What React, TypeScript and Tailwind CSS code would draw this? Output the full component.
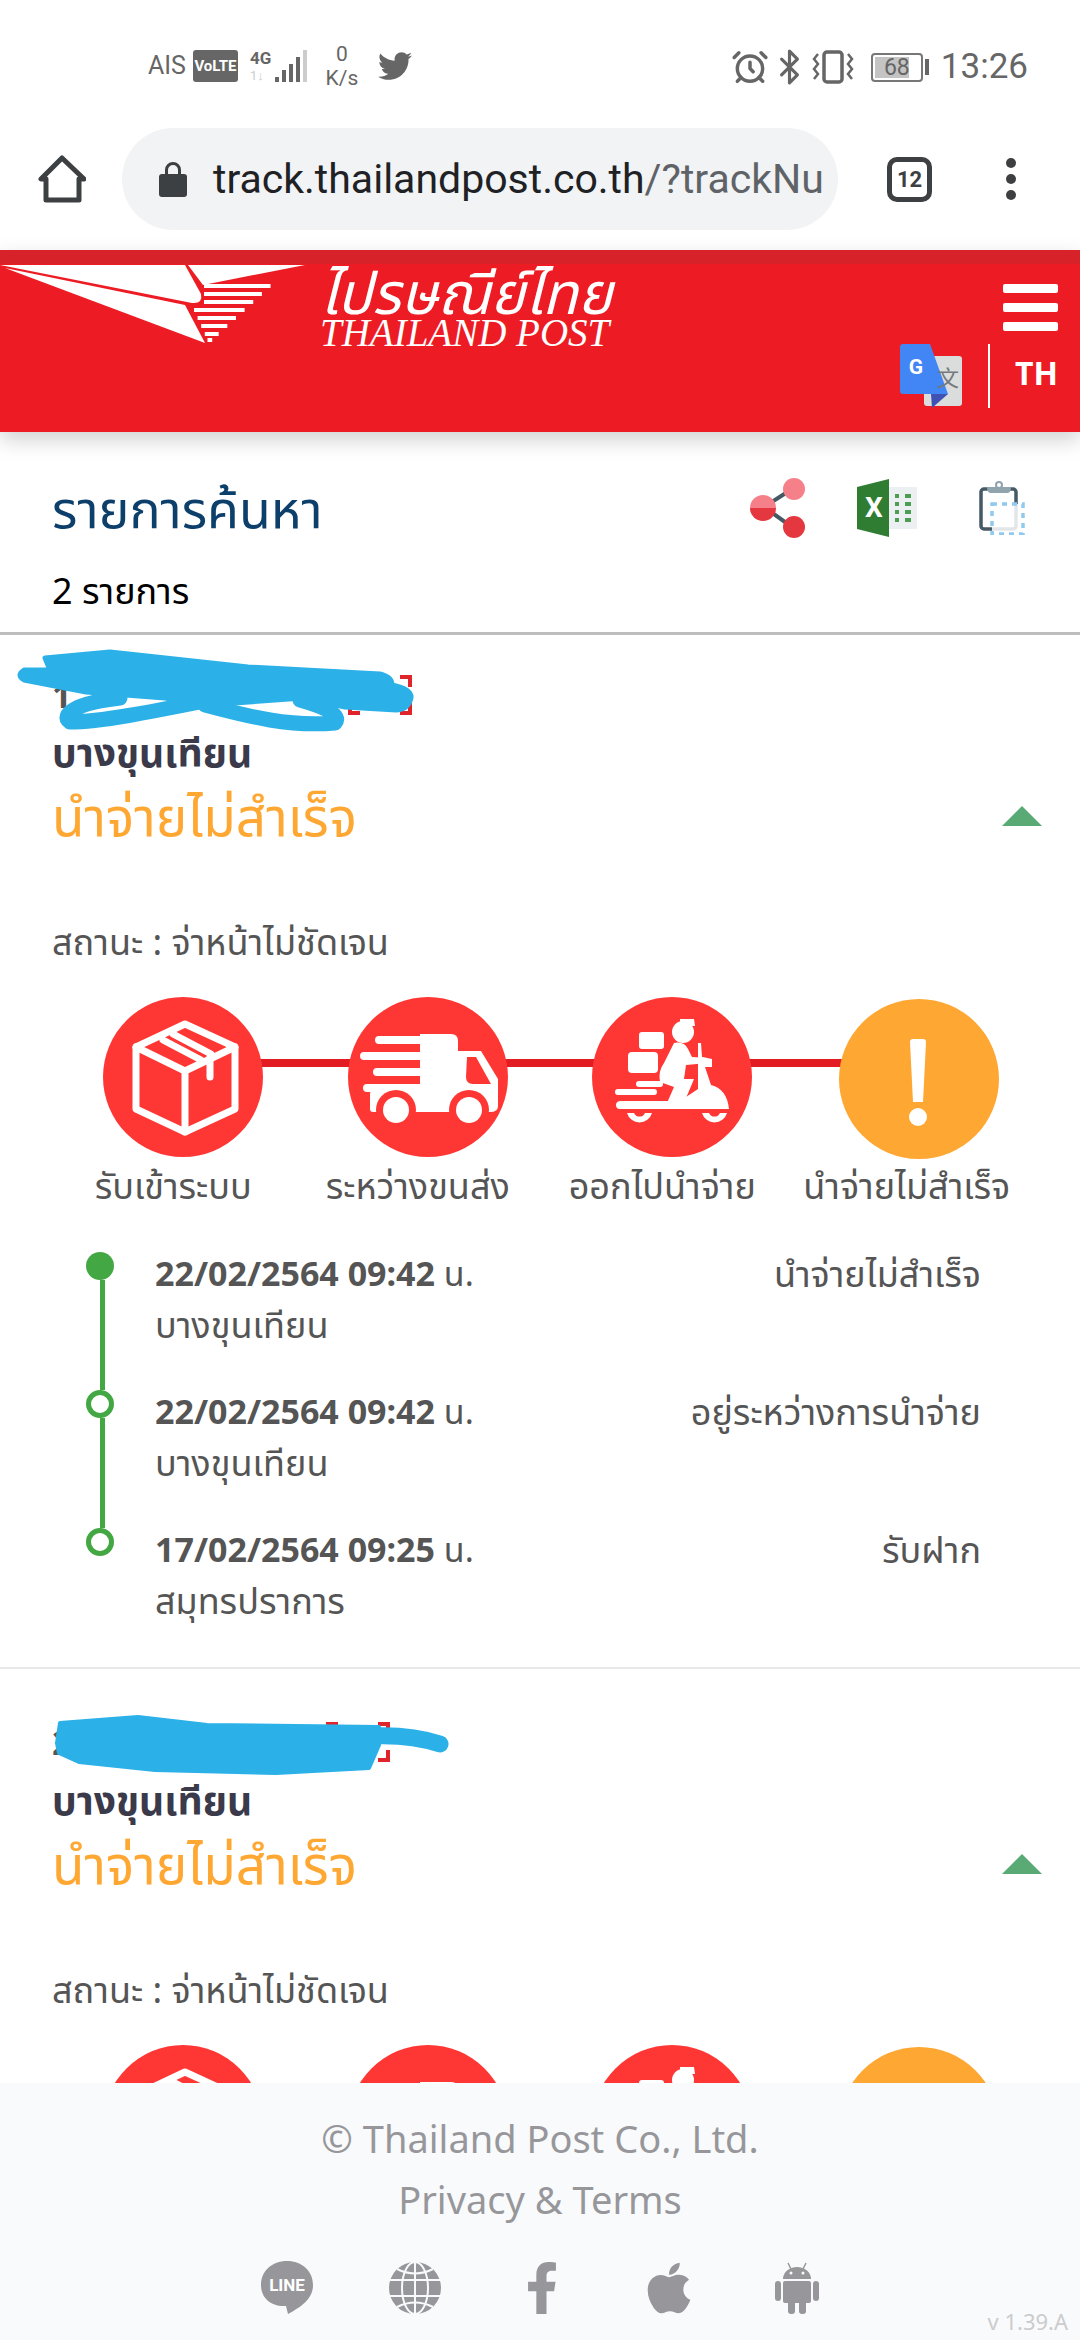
import { AlarmClock, Bluetooth } from "lucide-react";
import { FaApple, FaFacebookF, FaTwitter } from "react-icons/fa";

const font = "font-['Noto_Sans','Noto_Sans_Thai','Inter',sans-serif]";

function StatusBar() {
  return (
    <div className="h-[120px] flex items-start justify-between pl-[148px] pr-[52px] pt-[42px] text-[#666666] font-['Roboto',sans-serif]">
      <div className="flex items-center gap-[7px]">
        <span className="text-[25px] leading-[36px]">AIS</span>
        <span className="w-[45px] h-[32px] rounded-[3px] bg-[#666666] text-white text-[15px] font-bold flex items-center justify-center">
          VoLTE
        </span>
        <div className="ml-[5px] w-[18px] flex flex-col leading-none">
          <span className="text-[17px] font-bold">4G</span>
          <span className="text-[13px] text-[#cccccc] mt-[2px]">1↓</span>
        </div>
        <div className="flex items-end gap-[3px] h-[32px]">
          <div className="w-[4px] h-[5px] bg-[#666666]" />
          <div className="w-[4px] h-[12px] bg-[#666666]" />
          <div className="w-[4px] h-[18px] bg-[#666666]" />
          <div className="w-[4px] h-[25px] bg-[#666666]" />
          <div className="w-[4px] h-[32px] bg-[#cccccc]" />
        </div>
        <div className="ml-[8px] w-[40px] flex flex-col items-center text-[21px] leading-[24px]">
          <span>0</span>
          <span>K/s</span>
        </div>
        <FaTwitter className="ml-[8px] w-[36px] h-[34px]" />
      </div>
      <div className="mt-[6px] flex items-center">
        <AlarmClock className="w-[38px] h-[38px]" strokeWidth={2.2} />
        <Bluetooth className="ml-[1px] w-[39px] h-[38px]" strokeWidth={2} />
        <svg viewBox="0 0 42 34" className="ml-[3px] w-[42px] h-[34px]" fill="none" stroke="#666666" strokeWidth="2.5">
          <rect x="12" y="2" width="18" height="30" rx="3" strokeWidth="3.5" />
          <path d="M6 4 L2 9 L6 14 L2 19 L6 24 L2 29" />
          <path d="M36 4 L40 9 L36 14 L40 19 L36 24 L40 29" />
        </svg>
        <div className="ml-[17px] relative w-[52px] h-[29px] rounded-[4px] border-2 border-[#777777] p-[2px]">
          <div className="w-[34px] h-full bg-[#c4c4c4]" />
          <span className="absolute inset-0 flex items-center justify-center text-[23px] leading-none">68</span>
        </div>
        <div className="ml-[2px] w-[4px] h-[16px] bg-[#666666]" />
        <span className="ml-[12px] text-[35px] leading-[36px]">13:26</span>
      </div>
    </div>
  );
}

function ChromeBar() {
  return (
    <div className="h-[130px] pt-[8px] pb-[20px] flex items-center">
      <svg viewBox="0 0 48 48" className="ml-[38px] w-[48px] h-[48px]" fill="none" stroke="#3c4043" strokeWidth="5" strokeLinejoin="round">
        <path d="M24 3 L3 24 L8 24 L8 45 L41 45 L41 24 L46 24 Z" />
      </svg>
      <div className="ml-[36px] w-[716px] h-[102px] rounded-full bg-[#f1f3f4] flex items-center pl-[36px] overflow-hidden">
        <svg viewBox="0 0 30 36" className="w-[30px] h-[36px]" fill="#3c4043">
          <path d="M7 14 V9 a8 8 0 0 1 16 0 V14 H20 V9 a5 5 0 0 0 -10 0 V14 Z" />
          <rect x="1" y="13" width="28" height="23" rx="3" />
        </svg>
        <span className="ml-[25px] text-[41px] leading-[50px] whitespace-nowrap font-['Roboto',sans-serif] text-[#202124]">
          track.thailandpost.co.th<span className="text-[#5f6368]">/?trackNu</span>
        </span>
      </div>
      <div className="ml-[49px] w-[45px] h-[45px] rounded-[10px] border-[5px] border-[#3c4043] flex items-center justify-center text-[22px] font-bold text-[#3c4043] font-['Roboto',sans-serif]">
        12
      </div>
      <div className="ml-[74px] flex flex-col gap-[6px]">
        <div className="w-[10px] h-[10px] rounded-full bg-[#3c4043]" />
        <div className="w-[10px] h-[10px] rounded-full bg-[#3c4043]" />
        <div className="w-[10px] h-[10px] rounded-full bg-[#3c4043]" />
      </div>
    </div>
  );
}

function PlaneLogo() {
  const stripes = [283, 291, 299, 307, 315, 323, 331, 337];
  return (
    <svg viewBox="0 0 310 82" className="w-[310px] h-[82px]">
      <path d="M0 1 H185 L201 30 Q203 40 192 39 Z" fill="#ffffff" />
      <path d="M5 4 L185 41 L205 79 Z" fill="#ffffff" />
      <path d="M188 1 H305 L203 21 Z" fill="#ffffff" />
      {stripes.map((y) => {
        const left = y < 307 ? 204 : 194 + (y - 307) * 0.45;
        const right = 277 - (y - 277) * 1.08;
        return <rect key={y} x={left} y={y - 263} width={Math.max(right - left, 2)} height="4" fill="#ffffff" />;
      })}
    </svg>
  );
}

function Header() {
  return (
    <header className="relative z-10 h-[182px] bg-[#ed1c24] border-t-[14px] border-[#d8222a] shadow-[0_8px_20px_rgba(0,0,0,0.18)] flex justify-between">
      <div className="flex items-start">
        <PlaneLogo />
        <div className="ml-[10px] flex flex-col text-white italic font-['Liberation_Serif',serif]">
          <span className={`text-[58px] leading-[56px] whitespace-nowrap ${font}`}>ไปรษณีย์ไทย</span>
          <span className="text-[39px] leading-[26px] whitespace-nowrap">THAILAND POST</span>
        </div>
      </div>
      <div className="flex flex-col items-end pr-[22px] pt-[20px]">
        <div className="flex flex-col gap-[10px]">
          <div className="w-[55px] h-[9px] rounded-[2px] bg-white" />
          <div className="w-[55px] h-[9px] rounded-[2px] bg-white" />
          <div className="w-[55px] h-[9px] rounded-[2px] bg-white" />
        </div>
        <div className="mt-[13px] flex items-center">
          <svg viewBox="0 0 62 64" className="w-[62px] h-[64px]">
            <rect x="24" y="12" width="38" height="50" rx="3" fill="#dbdcdc" />
            <path d="M3 0 H30 L48 50 H3 Q0 50 0 47 V3 Q0 0 3 0 Z" fill="#4285f4" />
            <path d="M31 50 H48 L32 64 Z" fill="#3f51b5" />
            <text x="16" y="30" fontSize="21" fontWeight="700" textAnchor="middle" fill="#ffffff" fontFamily="Roboto">G</text>
            <text x="48" y="42" fontSize="22" textAnchor="middle" fill="#75797d" fontFamily="'Noto Sans CJK SC'">文</text>
          </svg>
          <div className="ml-[26px] w-[2px] h-[64px] bg-white" />
          <span className="ml-[25px] mb-[6px] text-[32px] leading-[36px] font-bold text-white font-['Noto_Sans',sans-serif]">TH</span>
        </div>
      </div>
    </header>
  );
}

function ResultHead() {
  return (
    <section className="h-[203px] border-b-[3px] border-[#bdbdbd] pl-[52px] pr-[55px] pt-[46px]">
      <div className="flex items-center justify-between h-[60px]">
        <h1 className="text-[52px] leading-[60px] text-[#0d3f6b]">รายการค้นหา</h1>
        <div className="flex items-center">
          <svg viewBox="0 0 56 62" className="w-[56px] h-[62px]">
            <path d="M42 12 L14 30 L42 50" fill="none" stroke="#455a64" strokeWidth="4" />
            <circle cx="44" cy="12" r="11" fill="#f6808a" />
            <path d="M0 31 a13 13 0 0 1 26 0 Z" fill="#f6808a" />
            <path d="M0 31 a13 13 0 0 0 26 0 Z" fill="#e53740" />
            <circle cx="44" cy="50" r="11" fill="#e53740" />
          </svg>
          <svg viewBox="0 0 60 58" className="ml-[51px] w-[60px] h-[58px]">
            <rect x="30" y="8" width="30" height="42" rx="1" fill="#edf0f2" />
            <path d="M0 8 L32 0 V58 L0 50 Z" fill="#2e7d32" />
            <text x="17" y="38" fontSize="28" fontWeight="700" textAnchor="middle" fill="#ffffff" fontFamily="Roboto">X</text>
            <path d="M38 17 H42 M48 17 H54 M38 25 H42 M48 25 H54 M38 33 H42 M48 33 H54 M38 41 H42 M48 41 H54" stroke="#4c9f50" strokeWidth="4" />
          </svg>
          <svg viewBox="0 0 46 54" className="ml-[62px] w-[46px] h-[54px]" fill="none">
            <rect x="2" y="8" width="35" height="40" rx="3" stroke="#455a64" strokeWidth="3.5" />
            <path d="M8 6 H17 a4 4 0 0 1 6 0 H32 Q32 12 28 12 H12 Q8 12 8 6 Z" fill="#90a4ae" />
            <circle cx="20" cy="4" r="3" stroke="#90a4ae" strokeWidth="2" fill="#ffffff" />
            <rect x="13" y="23" width="31" height="30" fill="#ffffff" fillOpacity="0.85" stroke="#90caf0" strokeWidth="3.5" strokeDasharray="5 5" />
          </svg>
        </div>
      </div>
      <p className="mt-[33px] text-[36px] leading-[40px] text-black">2 รายการ</p>
    </section>
  );
}

function ScanIcon() {
  return (
    <svg viewBox="0 0 64 40" className="w-[64px] h-[40px]" fill="none" stroke="#e0242c" strokeWidth="4">
      <path d="M2 12 V2 H12 M52 2 H62 V12 M2 28 V38 H12 M52 38 H62 V28" />
    </svg>
  );
}

function ScribbleOne() {
  return (
    <svg viewBox="0 0 430 100" className="absolute left-0 top-[-30px] w-[430px] h-[100px]" fill="none" stroke="#2bb1e8" strokeLinecap="round" strokeLinejoin="round">
      <path d="M45 13 L110 7 L248 22 L380 29 Q392 32 392 40 Q412 44 411 53 Q408 65 396 65 L345 62 L303 53 L207 60 L165 53 L86 47 L24 35 Q16 30 24 25 L50 25 Z" fill="#2bb1e8" strokeWidth="5" />
      <path d="M120 53 C75 58 60 70 70 77 C100 77 150 67 210 55" strokeWidth="15" />
      <path d="M205 60 C250 72 290 82 335 78 C342 70 325 62 300 55" strokeWidth="15" />
    </svg>
  );
}

function ScribbleTwo() {
  return (
    <svg viewBox="0 0 450 70" className="absolute left-0 top-[-12px] w-[450px] h-[70px]" fill="#2bb1e8" stroke="#2bb1e8" strokeLinecap="round" strokeLinejoin="round">
      <path d="M60 13 L138 7 L207 15 L379 17 L379 35 L369 58 L276 63 L155 60 L79 52 L59 43 L57 33 Z" strokeWidth="4" />
      <path d="M370 26 Q410 24 440 34" fill="none" strokeWidth="17" />
    </svg>
  );
}

function BoxIcon() {
  return (
    <svg viewBox="0 0 160 160" className="w-[160px] h-[160px]" fill="none" stroke="#ffffff" strokeWidth="7" strokeLinejoin="round" strokeLinecap="round">
      <path d="M82 27 L132 50 V112 L82 135 L33 112 V50 Z" />
      <path d="M33 50 L82 74 L132 50 M82 74 V135" />
      <path d="M60 43 L98 63 M70 37 L108 57 M107 60 V80" />
    </svg>
  );
}

function TruckIcon() {
  return (
    <svg viewBox="0 0 160 160" className="w-[160px] h-[160px]">
      <path d="M72 37 H103 Q110 37 110 44 V54 H133 L150 82 V109 Q150 115 142 115 H72 Z" fill="#ffffff" />
      <path d="M119 60 H128 L143 87 H125 Q118 87 118 80 Z" fill="#ff3734" />
      <rect x="22" y="94" width="60" height="21" rx="3" fill="#ffffff" />
      <path d="M31 43 H80 M16 59 H80 M29 75 H80 M19 91 H80" stroke="#ffffff" strokeWidth="8" strokeLinecap="round" />
      <circle cx="48" cy="113" r="20" fill="#ff3734" />
      <circle cx="48" cy="113" r="13" fill="#ffffff" />
      <circle cx="121" cy="113" r="20" fill="#ff3734" />
      <circle cx="121" cy="113" r="13" fill="#ffffff" />
    </svg>
  );
}

function ScooterIcon() {
  return (
    <svg viewBox="0 0 160 160" className="w-[160px] h-[160px]" fill="#ffffff">
      <circle cx="91" cy="35" r="11" />
      <path d="M88 22 H102 L103 29 H88 Z" />
      <rect x="47" y="35" width="25" height="17" rx="3" />
      <rect x="36" y="55" width="30" height="21" rx="4" />
      <path d="M82 46 Q92 44 96 52 L100 60 L116 61 V66 L94 68 L92 82 H102 L92 106 H75 L82 90 L68 85 Q66 74 72 66 Z" />
      <path d="M106 46 L109 46 L110 60 L120 62 L120 70 H113 L119 88 Q135 92 137 112 H28 Q24 112 24 108 Q24 104 29 104 H88 L106 92 Z" />
      <path d="M47 87 H68 M26 95 H62" stroke="#ffffff" strokeWidth="6" strokeLinecap="round" />
      <path d="M35 116 A13 13 0 0 0 60 116 L53 116 A6 6 0 0 1 42 116 Z" />
      <path d="M110 116 A13 13 0 0 0 135 116 L128 116 A6 6 0 0 1 117 116 Z" />
    </svg>
  );
}

function WarnIcon() {
  return (
    <svg viewBox="0 0 160 160" className="w-[160px] h-[160px]" fill="#ffffff">
      <path d="M71 43 Q71 40 74 40 H84 Q87 40 87 43 L84 103 H74 Z" />
      <circle cx="79" cy="118" r="9" />
    </svg>
  );
}

function AndroidIcon() {
  return (
    <svg viewBox="0 0 44 52" className="w-[44px] h-[52px]" fill="#97979b">
      <path d="M13 1 L16 7 M31 1 L28 7" stroke="#97979b" strokeWidth="1.5" fill="none" />
      <path d="M8 17 a14 12 0 0 1 28 0 Z" />
      <rect x="8" y="19" width="28" height="22" rx="2" />
      <rect x="0" y="19" width="6" height="20" rx="3" />
      <rect x="38" y="19" width="6" height="20" rx="3" />
      <rect x="13" y="38" width="7" height="14" rx="3" />
      <rect x="24" y="38" width="7" height="14" rx="3" />
      <circle cx="16" cy="11" r="1.5" fill="#f9fafc" />
      <circle cx="28" cy="11" r="1.5" fill="#f9fafc" />
    </svg>
  );
}

const steps = [
  { label: "รับเข้าระบบ", icon: <BoxIcon />, color: "bg-[#ff3734] ml-[20px]" },
  { label: "ระหว่างขนส่ง", icon: <TruckIcon />, color: "bg-[#ff3734] ml-[20px]" },
  { label: "ออกไปนำจ่าย", icon: <ScooterIcon />, color: "bg-[#ff3734] ml-[20px]" },
  { label: "นำจ่ายไม่สำเร็จ", icon: <WarnIcon />, color: "bg-[#ffa733] ml-[24px] translate-y-[2px]" },
];

const events = [
  { date: "22/02/2564 09:42", place: "บางขุนเทียน", status: "นำจ่ายไม่สำเร็จ" },
  { date: "22/02/2564 09:42", place: "บางขุนเทียน", status: "อยู่ระหว่างการนำจ่าย" },
  { date: "17/02/2564 09:25", place: "สมุทรปราการ", status: "รับฝาก" },
];

function StepRow({ labels }: { labels: boolean }) {
  return (
    <div className="mt-[35px] grid grid-cols-4 px-[51px]">
      {steps.map((step, index) => (
        <div key={step.label} className="relative flex flex-col items-center">
          {index < 3 && <div className="absolute left-[132px] top-[62px] h-[8px] w-[245px] bg-[#e31b23]" />}
          <div className={`relative h-[160px] w-[160px] rounded-full ${step.color}`}>{step.icon}</div>
          {labels && <span className="mt-[9px] text-[36px] leading-[40px] whitespace-nowrap text-[#555555]">{step.label}</span>}
        </div>
      ))}
    </div>
  );
}

function Timeline() {
  return (
    <div className="mt-[46px] pl-[86px] pr-[99px]">
      {events.map((event, index) => (
        <div key={index} className={`flex ${index === 2 ? "h-[100px]" : "h-[138px]"}`}>
          <div className="w-[28px] flex flex-col">
            {index === 0 ? (
              <div className="w-[28px] h-[28px] rounded-full bg-[#43a843] shrink-0" />
            ) : (
              <div className="w-[28px] h-[28px] rounded-full border-[5px] border-[#43a843] shrink-0" />
            )}
            {index < 2 && <div className="ml-[14px] w-[5px] flex-1 bg-[#43a843]" />}
          </div>
          <div className="ml-[41px] -mt-[4px] flex-1 flex justify-between text-[36px] leading-[51px] text-[#555555]">
            <div>
              <p className="text-[34px]">
                <span className="font-bold">{event.date}</span> น.
              </p>
              <p>{event.place}</p>
            </div>
            <p>{event.status}</p>
          </div>
        </div>
      ))}
    </div>
  );
}

function TrackItem({ index, last }: { index: number; last?: boolean }) {
  return (
    <article className={`${last ? "pt-[53px]" : "pt-[40px] pb-[39px] border-b-2 border-[#e8e8e8]"}`}>
      <div className="relative h-[40px] pl-[52px] flex items-center">
        <span className={`text-[34px] leading-[40px] font-bold text-[#555555] ${last ? "w-[274px]" : "w-[296px]"}`}>{index}.</span>
        <ScanIcon />
        {last ? <ScribbleTwo /> : <ScribbleOne />}
      </div>
      <p className={`${last ? "mt-[16px]" : "mt-[15px]"} px-[52px] text-[39px] leading-[44px] font-bold text-[#3a3a4a]`}>บางขุนเทียน</p>
      <div className="mt-[12px] pl-[52px] pr-[38px] flex items-center justify-between">
        <p className="text-[53px] leading-[60px] text-[#ffa733]">นำจ่ายไม่สำเร็จ</p>
        <div className="w-0 h-0 border-x-[20px] border-x-transparent border-b-[20px] border-b-[#5aaa75]" />
      </div>
      <p className="mt-[76px] px-[52px] text-[36px] leading-[40px] text-[#555555]">สถานะ : จ่าหน้าไม่ชัดเจน</p>
      <StepRow labels={!last} />
      {!last && <Timeline />}
    </article>
  );
}

function Footer() {
  return (
    <footer className="relative shrink-0 h-[257px] bg-[#f9fafc] flex flex-col items-center text-[#97979b]">
      <p className="mt-[30px] text-[38px] leading-[50px]">© Thailand Post Co., Ltd.</p>
      <p className="mt-[11px] text-[38px] leading-[50px]">Privacy &amp; Terms</p>
      <div className="mt-[35px] flex items-center justify-center text-[#97979b]">
        <svg viewBox="0 0 52 54" className="w-[52px] h-[54px]" fill="#97979b">
          <path d="M26 0 C41 0 52 10 52 24 C52 38 40 46 27 53 L25 45 C10 46 0 37 0 24 C0 10 11 0 26 0 Z" />
          <text x="26" y="30" fontSize="17" fontWeight="700" textAnchor="middle" fill="#ffffff" fontFamily="Roboto">LINE</text>
        </svg>
        <svg viewBox="0 0 52 52" className="ml-[76px] w-[52px] h-[52px]" fill="#97979b" stroke="#f9fafc" strokeWidth="2">
          <circle cx="26" cy="26" r="26" stroke="none" />
          <path d="M0 18 H52 M0 34 H52 M26 0 V52" fill="none" />
          <ellipse cx="26" cy="26" rx="13" ry="26" fill="none" />
          <path d="M8 7 Q26 16 44 7 M8 45 Q26 36 44 45" fill="none" />
        </svg>
        <FaFacebookF className="ml-[84px] w-[34px] h-[52px]" />
        <FaApple className="ml-[85px] w-[50px] h-[58px]" />
        <div className="ml-[81px]">
          <AndroidIcon />
        </div>
      </div>
      <span className="absolute right-[12px] bottom-[6px] text-[22px] leading-[26px] text-[#cccccc]">v 1.39.A</span>
    </footer>
  );
}

export default function App() {
  return (
    <div className={`w-[1080px] h-[2340px] bg-white overflow-hidden flex flex-col ${font}`}>
      <StatusBar />
      <ChromeBar />
      <Header />
      <main className="flex-1 overflow-hidden">
        <ResultHead />
        <TrackItem index={1} />
        <TrackItem index={2} last />
      </main>
      <Footer />
    </div>
  );
}
